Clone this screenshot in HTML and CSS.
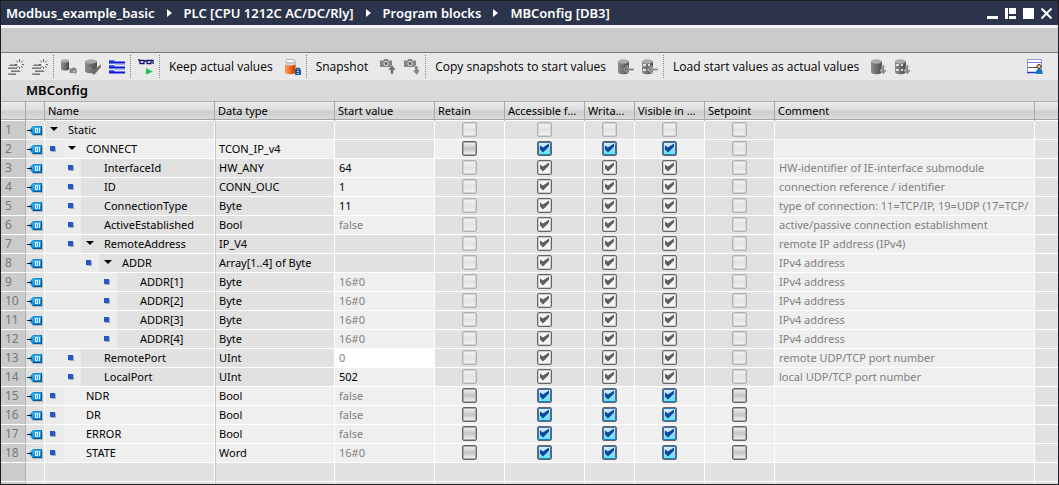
FILE: index.html
```
<!DOCTYPE html>
<html lang="en">
<head>
<meta charset="utf-8">
<title>MBConfig [DB3]</title>
<link rel="stylesheet" href="styles.css">
</head>
<body>
<svg class="defs" aria-hidden="true">
  <defs>
    <linearGradient id="steel"><stop offset="0" stop-color="#8c8c8c"/><stop offset=".35" stop-color="#777"/><stop offset="1" stop-color="#4c4c4c"/></linearGradient>
    <linearGradient id="orange"><stop offset="0" stop-color="#ff9a58"/><stop offset=".5" stop-color="#f36a1c"/><stop offset="1" stop-color="#b83800"/></linearGradient>
    <linearGradient id="tagfill" x2="0" y2="1"><stop offset="0" stop-color="#39b9f4"/><stop offset="1" stop-color="#0083dc"/></linearGradient>
    <symbol id="i-add" viewBox="0 0 16 16">
      <path d="M2 6h7M0 9h9M3 12h9M0 15h8" stroke="#a8a8a8" stroke-width="2"/>
      <path d="M1 6.500h8M0 9.500h9M3 12.500h9M1 15.500h7" stroke="#777"/>
      <path d="M11.500 0v3M11.500 7v3M7 5.500h3M13 5.500h3M8 1.500l2 2M15 1.500l-2 2M8.500 9l2-2M15 9l-2-2" stroke="#666"/>
      <path d="M11.500 3l1 1.500 1.500 1-1.500 1-1 1.500-1-1.500-1.500-1 1.500-1z" fill="#fff"/>
    </symbol>
    <symbol id="i-db" viewBox="0 0 16 16">
      <path d="M0 2v11c0 3 11 3 11 0V2z" fill="url(#steel)"/>
      <ellipse cx="5.500" cy="2.500" rx="5.500" ry="2.200" fill="#aaa"/>
    </symbol>
    <symbol id="i-undo" viewBox="0 0 16 16">
      <path d="M0 2v8c0 2 8 2 8 0V2z" fill="url(#steel)"/><ellipse cx="4" cy="2" rx="4" ry="1.700" fill="#aaa"/>
      <path d="M8.500 8v6H14l-2-2c2-.800 2.500 0 1.500 3.500 3-1.500 3-6.500 0-7-1.500-.300-2.500.500-3.500 1.500z" fill="#858585"/>
    </symbol>
    <symbol id="i-check" viewBox="0 0 16 16">
      <path d="M0 2v10c0 3 12 3 12 0V2z" fill="url(#steel)"/>
      <ellipse cx="6" cy="2.500" rx="6" ry="2.200" fill="#aaa"/>
      <path d="M5 9l3.500 3L16 5v3l-7 8-5-5z" fill="#666" stroke="#bbb" stroke-width=".5"/>
    </symbol>
    <symbol id="i-list" viewBox="0 0 16 16">
      <path d="M0 1h5l1 2H0zM0 6h5l1 2H0zM0 11h5l1 2H0z" fill="#4b64f4"/>
      <path d="M0 3.500h16M0 8.500h16M0 13.500h16" stroke="#0718d8" stroke-width="1.800"/>
      <path d="M6 5.500h10M6 10.500h10" stroke="#a9b4ff"/>
    </symbol>
    <symbol id="i-monitor" viewBox="0 0 16 16">
      <path d="M2 1.500h4v3H2zM9 1.500h4v3H9zM6 2h3M0 1h2M13 1.500h2V5" fill="#fff" stroke="#15156c" stroke-width="1.300"/>
      <path d="M8 9l7 3.500-7 3z" fill="#13bf45"/><path d="M8 9l7 3.500" stroke="#aaddb4"/>
    </symbol>
    <symbol id="i-keep" viewBox="0 0 16 16">
      <path d="M0 2v11c0 3 10.500 3 10.500 0V2z" fill="url(#orange)"/>
      <path d="M0 2v3c0 2 10.500 2 10.500 0V2z" fill="#d6d6d6"/><ellipse cx="5.200" cy="2.200" rx="4.800" ry="1.800" fill="#fff" stroke="#888" stroke-width=".7"/>
      <path d="M11.500 11V9.500h3V11" fill="none" stroke="#245f9c" stroke-width="1.300"/>
      <path d="M10 10.500h6V16h-6z" fill="#1e5896"/><path d="M12 12h2v1h-2zM12 14h2v1h-2z" fill="#a9d2f6"/>
    </symbol>
    <symbol id="i-camera" viewBox="0 0 16 16">
      <path d="M0 1h4V0h4v1h4v7H0z" fill="#858585"/><path d="M0 1.500h4M8 1.500h4" stroke="#b5b5b5"/>
      <circle cx="6" cy="4.500" r="2.500" fill="#ddd"/><circle cx="6" cy="4.500" r="1.500" fill="#5e5e5e"/>
    </symbol>
    <symbol id="i-cam-up" viewBox="0 0 16 16">
      <use href="#i-camera" width="16" height="16"/>
      <path d="M12 6l4 5h-2.500v4h-3v-4H8z" fill="#6d6d6d" stroke="#ddd" stroke-width=".6"/>
    </symbol>
    <symbol id="i-cam-down" viewBox="0 0 16 16">
      <use href="#i-camera" width="16" height="16"/>
      <path d="M10 7h4v4h2l-3 5-4-4 2-1z" fill="#858585" stroke="#ddd" stroke-width=".6"/>
    </symbol>
    <symbol id="i-dots" viewBox="0 0 16 16">
      <path d="M1 5h3v2H1zM6 5h2v2H6zM1 10h3v2H1zM6 10h2v2H6z" fill="#e0e0e0"/>
    </symbol>
    <symbol id="i-db-left" viewBox="0 0 16 16">
      <use href="#i-db" width="16" height="16"/>
      <path d="M5.500 10.500L10 6.500v3h6v2h-6v3z" fill="#777" stroke="#ccc" stroke-width=".6"/>
    </symbol>
    <symbol id="i-db-left-all" viewBox="0 0 16 16">
      <use href="#i-db" width="16" height="16"/><use href="#i-dots" width="16" height="16"/>
      <path d="M5.500 10.500L10 6.500v3h6v2h-6v3z" fill="#888" stroke="#ccc" stroke-width=".6"/>
    </symbol>
    <symbol id="i-db-down" viewBox="0 0 16 16">
      <use href="#i-db" width="16" height="16"/>
      <path d="M11 6h2.500v5H16l-3.500 4.500L9 11h2z" fill="#888" stroke="#ddd" stroke-width=".6"/>
    </symbol>
    <symbol id="i-db-down-all" viewBox="0 0 16 16">
      <use href="#i-db" width="16" height="16"/><use href="#i-dots" width="16" height="16"/>
      <path d="M11 6h2.500v5H16l-3.500 4.500L9 11h2z" fill="#888" stroke="#ddd" stroke-width=".6"/>
    </symbol>
    <symbol id="i-layout" viewBox="0 0 16 16">
      <path d="M.5.5h14v13H.5z" fill="#fff" stroke="#9098cc"/><path d="M0 3.500h15" stroke="#7880d8"/><path d="M1 8.500h9" stroke="#555"/><path d="M0 13.500h9" stroke="#2536d8" stroke-width="1.500"/>
      <circle cx="12" cy="7.500" r="2" fill="#f2cf8a" stroke="#3f2600"/><path d="M9 15v-3l2-2h2.500l2 2v3z" fill="#1675be"/>
    </symbol>
    <symbol id="i-tag" viewBox="0 0 16 10">
      <path d="M6 2h10v8H6L3 6z" fill="#b9b9b9"/>
      <path d="M2 4.500L6 0h9v9H6z" fill="url(#tagfill)"/>
      <path d="M6 8.500h8.500V0" fill="none" stroke="#05559b"/><path d="M3 4L6.200.5H14" fill="none" stroke="#168bd0"/>
      <path d="M0 4.500h5" stroke="#123"/>
      <path d="M8.500 2.500h2v4h-2zM12.500 2v5" fill="none" stroke="#fff"/>
    </symbol>
  </defs>
</svg>

<main class="window">
  <header class="titlebar">
    <nav class="crumbs" aria-label="Location">
      <span>Modbus_example_basic</span>
      <svg class="chevron" viewBox="0 0 5 8"><path d="M0 0l5 4-5 4z"/></svg>
      <span>PLC [CPU 1212C AC/DC/Rly]</span>
      <svg class="chevron" viewBox="0 0 5 8"><path d="M0 0l5 4-5 4z"/></svg>
      <span>Program blocks</span>
      <svg class="chevron" viewBox="0 0 5 8"><path d="M0 0l5 4-5 4z"/></svg>
      <span>MBConfig [DB3]</span>
    </nav>
    <div class="controls">
      <button aria-label="Minimize"><svg viewBox="0 0 11 11"><path d="M0 8h11v3H0z"/></svg></button>
      <button aria-label="Float"><svg viewBox="0 0 11 11"><path d="M0 0h3v11H0zM4 0h7v6H4zM4 8h7v3H4z"/></svg></button>
      <button aria-label="Maximize"><svg viewBox="0 0 11 11"><path d="M0 0h11v11H0z"/></svg></button>
      <button aria-label="Close"><svg viewBox="0 0 11 11"><path class="cross" d="M.5.5l10 10M10.500.5l-10 10"/></svg></button>
    </div>
  </header>
  <div class="band"></div>
  <div class="toolbar" role="toolbar" aria-label="Block tools">
    <div class="group">
      <button aria-label="Insert row"><svg class="icon"><use href="#i-add"/></svg></button>
      <button aria-label="Add row"><svg class="icon"><use href="#i-add"/></svg></button>
    </div>
    <div class="group">
      <button aria-label="Reset start values"><svg class="icon"><use href="#i-undo"/></svg></button>
      <button aria-label="Update interface"><svg class="icon"><use href="#i-check"/></svg></button>
      <button aria-label="Expanded mode"><svg class="icon"><use href="#i-list"/></svg></button>
    </div>
    <div class="group">
      <button aria-label="Monitor all"><svg class="icon"><use href="#i-monitor"/></svg></button>
    </div>
    <div class="group">
      <button class="label">Keep actual values</button>
      <button aria-label="Keep"><svg class="icon"><use href="#i-keep"/></svg></button>
    </div>
    <div class="group">
      <button class="label">Snapshot</button>
      <button aria-label="Upload snapshot"><svg class="icon"><use href="#i-cam-up"/></svg></button>
      <button aria-label="Download snapshot"><svg class="icon"><use href="#i-cam-down"/></svg></button>
    </div>
    <div class="group">
      <button class="label">Copy snapshots to start values</button>
      <button aria-label="Copy setpoints"><svg class="icon"><use href="#i-db-left"/></svg></button>
      <button aria-label="Copy all values"><svg class="icon"><use href="#i-db-left-all"/></svg></button>
    </div>
    <div class="group">
      <button class="label">Load start values as actual values</button>
      <button aria-label="Load setpoints"><svg class="icon"><use href="#i-db-down"/></svg></button>
      <button aria-label="Load all values"><svg class="icon"><use href="#i-db-down-all"/></svg></button>
    </div>
    <button class="layout" aria-label="Save window layout"><svg class="icon"><use href="#i-layout"/></svg></button>
  </div>
  <h1 class="heading">MBConfig</h1>
  <table class="grid">
    <colgroup>
      <col class="c-num"><col class="c-icon"><col class="c-name"><col class="c-type"><col class="c-start"><col class="c-flag"><col class="c-access"><col class="c-write"><col class="c-flag"><col class="c-flag"><col class="c-comment"><col>
    </colgroup>
    <thead>
      <tr><th></th><th></th><th>Name</th><th>Data type</th><th>Start value</th><th>Retain</th><th>Accessible f...</th><th>Writa...</th><th>Visible in ...</th><th>Setpoint</th><th>Comment</th><th></th></tr>
    </thead>
    <tbody id="rows"></tbody>
  </table>
</main>
<script src="grid.js"></script>
</body>
</html>
```
FILE: styles.css
```
* { box-sizing: border-box; }
body {
  margin: 0;
  font: 11px/18px "Noto Sans", "Open Sans", sans-serif;
  color: #000;
  background: #e1e1e1;
}
button {
  display: flex;
  align-items: center;
  padding: 0;
  border: 0;
  background: none;
  font: inherit;
  color: inherit;
}
.defs { position: absolute; width: 0; height: 0; }
.window {
  display: flex;
  flex-direction: column;
  height: 100vh;
  overflow: hidden;
  border: 1px solid #1c1c20;
}

.titlebar {
  display: flex;
  flex: none;
  align-items: center;
  justify-content: space-between;
  height: 24px;
  padding: 0 6px 0 5px;
  background: #2c344c;
  color: #fff;
}
.crumbs {
  display: flex;
  align-items: center;
  gap: 12px;
  font-size: 13px;
  font-weight: 600;
  white-space: nowrap;
}
.chevron { width: 5px; height: 8px; fill: #fff; }
.controls { display: flex; gap: 7px; }
.controls svg { width: 11px; height: 11px; fill: #fff; }
.controls .cross { stroke: #fff; stroke-width: 2; }

.band {
  flex: none;
  height: 28px;
  border-top: 3px solid #f4f4f4;
  border-bottom: 1px solid #777;
  background: #cbcbcb;
}

.toolbar {
  display: flex;
  flex: none;
  align-items: center;
  height: 27px;
  padding-right: 15px;
  background: #e9e9e9;
  font-family: "Open Sans", "Noto Sans", sans-serif;
  font-size: 12px;
  white-space: nowrap;
}
.group {
  display: flex;
  align-items: center;
  gap: 8px;
  height: 23px;
  padding: 0 5px 0 7px;
}
.group + .group { border-left: 1px dotted #888; }
.icon { display: block; width: 16px; height: 16px; }
.label { padding: 0 4px 0 2px; }
.layout { margin-left: auto; }

.heading {
  flex: none;
  height: 21px;
  margin: 0;
  padding-left: 25px;
  background: #d9d9d9;
  font-size: 13px;
  font-weight: 600;
  line-height: 20px;
}

.grid {
  flex: none;
  width: 100%;
  table-layout: fixed;
  border-collapse: separate;
  border-spacing: 0;
}
.c-num { width: 25px; }
.c-icon { width: 19px; }
.c-name { width: 170px; }
.c-type { width: 120px; }
.c-start { width: 100px; }
.c-flag { width: 70px; }
.c-access { width: 80px; }
.c-write { width: 50px; }
.c-comment { width: 260px; }

.grid th {
  height: 20px;
  padding: 0 0 2px 3px;
  border-top: 1px solid #b0b0b0;
  border-right: 1px solid #a8a8a8;
  background: linear-gradient(#ececec, #dedede 7px, #cfcfcf 10px, #dadada 17px, #a5a5a5 17px, #a5a5a5 18px, #fff 18px);
  font-weight: 400;
  text-align: left;
  line-height: 17px;
  white-space: nowrap;
}
.grid td {
  height: 19px;
  padding: 0 0 0 4px;
  border-right: 1px solid #fff;
  border-bottom: 1px solid #fff;
  background: #e1e1e1;
  line-height: 18px;
  white-space: nowrap;
  overflow: hidden;
}
.grid th:last-child, .grid td:last-child { border-right: 0; }
.grid td.number {
  border-right-color: #b0b0b0;
  background: #cbcbcb;
  color: #777;
  font-size: 12px;
}
.grid td.symbol { padding: 2px 0 0; }
.grid td.name { padding: 0; }
.grid td.type { border-left: 1px solid #c4c4c4; padding-left: 3px; }
.grid td.open { background: #efefef; }
.grid td.selected { background: #fff; }
.grid td.muted { color: #808080; }
.grid td.flag { padding: 0 0 2px; }

.tag { display: block; width: 16px; height: 10px; margin: 0 1px; }
.tree { display: flex; align-items: center; height: 18px; }
.indent {
  display: flex;
  align-items: center;
  justify-content: flex-end;
  align-self: stretch;
  padding: 0 8px 1px 0;
  background: #ebebeb;
}
.indent-0 { display: none; }
.indent-1 { width: 18px; }
.indent-2 { width: 36px; }
.indent-3 { width: 54px; }
.indent-4 { width: 72px; }
.bullet {
  width: 5px;
  height: 5px;
  background: #2854cc;
  box-shadow: 1px 1px #a8acb8;
}
.toggle { width: 23px; padding: 0 0 2px 5px; }
.toggle svg { width: 8px; height: 4px; }

.box {
  appearance: none;
  display: block;
  width: 15px;
  height: 15px;
  margin: 0 auto;
  border: 1px solid #666;
  border-radius: 2px;
  background: linear-gradient(#f5f5f5, #c4c5c6 50%, #f5f5f5);
  box-shadow: inset 0 0 0 1px #aaa;
}
.box:disabled {
  border-color: #b2b2b2;
  background: linear-gradient(#f3f3f3, #e3e3e3 50%, #f3f3f3);
  box-shadow: inset 0 0 0 1px #d2d2d2;
}
.box:checked { background: linear-gradient(#eef2ff, #a9d2f0 50%, #4eeef8); box-shadow: inset 0 0 0 1px #2878c4; }
.box:checked:disabled { border-color: #666; background: #f4f4f4; box-shadow: inset 0 0 0 1px #ccc; }
.box:checked::before {
  content: "";
  display: block;
  height: 13px;
  background: #064a9c;
  clip-path: polygon(2px 4px, 5px 6px, 11px 2px, 11px 5px, 5px 11px, 2px 8px);
}
.box:checked:disabled::before { background: #5f5f5f; }
```
FILE: grid.js
```
// level, name, type, start value, start style, comment, kind, expandable
const rows = [
  [0, "Static", "", "", "", "", "root", true],
  [1, "CONNECT", "TCON_IP_v4", "", "", "", "struct", true],
  [2, "InterfaceId", "HW_ANY", "64", "open", "HW-identifier of IE-interface submodule", "member"],
  [2, "ID", "CONN_OUC", "1", "open", "connection reference / identifier", "member"],
  [2, "ConnectionType", "Byte", "11", "open", "type of connection: 11=TCP/IP, 19=UDP (17=TCP/", "member"],
  [2, "ActiveEstablished", "Bool", "false", "open muted", "active/passive connection establishment", "member"],
  [2, "RemoteAddress", "IP_V4", "", "", "remote IP address (IPv4)", "member", true],
  [3, "ADDR", "Array[1..4] of Byte", "", "", "IPv4 address", "member", true],
  [4, "ADDR[1]", "Byte", "16#0", "open muted", "IPv4 address", "member"],
  [4, "ADDR[2]", "Byte", "16#0", "open muted", "IPv4 address", "member"],
  [4, "ADDR[3]", "Byte", "16#0", "open muted", "IPv4 address", "member"],
  [4, "ADDR[4]", "Byte", "16#0", "open muted", "IPv4 address", "member"],
  [2, "RemotePort", "UInt", "0", "selected muted", "remote UDP/TCP port number", "member"],
  [2, "LocalPort", "UInt", "502", "open", "local UDP/TCP port number", "member"],
  [1, "NDR", "Bool", "false", "open muted", "", "own"],
  [1, "DR", "Bool", "false", "open muted", "", "own"],
  [1, "ERROR", "Bool", "false", "open muted", "", "own"],
  [1, "STATE", "Word", "16#0", "open muted", "", "own"]
];

const flag = (label, name, open, checked) =>
  `<td class="flag ${open ? "open" : ""}"><input class="box" type="checkbox" aria-label="${label}: ${name}"${checked ? " checked" : ""}${open ? "" : " disabled"}></td>`;

const html = rows.map(([level, name, type, start, style, comment, kind, expandable], i) => {
  const top = kind === "struct" || kind === "own";
  const open = top ? "open" : "";
  const on = kind !== "root";
  const toggle = expandable
    ? `<button class="toggle" aria-label="Collapse ${name}"><svg viewBox="0 0 8 4"><path d="M0 0h8L4 4z"/></svg></button>`
    : `<span class="toggle"></span>`;
  return `<tr>
    <td class="number">${i + 1}</td>
    <td class="symbol"><svg class="tag"><use href="#i-tag"/></svg></td>
    <td class="name ${open}"><div class="tree"><span class="indent indent-${level}"><i class="bullet"></i></span>${toggle}<span>${name}</span></div></td>
    <td class="type ${open}">${type}</td>
    <td class="${style}">${start}</td>
    ${flag("Retain", name, top, false)}
    ${flag("Accessible", name, top, on)}
    ${flag("Writable", name, top, on)}
    ${flag("Visible", name, top, on)}
    ${flag("Setpoint", name, kind === "own", false)}
    <td class="muted ${on ? "open" : ""}">${comment}</td>
    <td></td>
  </tr>`;
});

const blank = `<tr><td class="number"></td><td></td><td></td><td class="type"></td>${"<td></td>".repeat(8)}</tr>`;
document.getElementById("rows").innerHTML = html.join("") + blank + blank;
```
